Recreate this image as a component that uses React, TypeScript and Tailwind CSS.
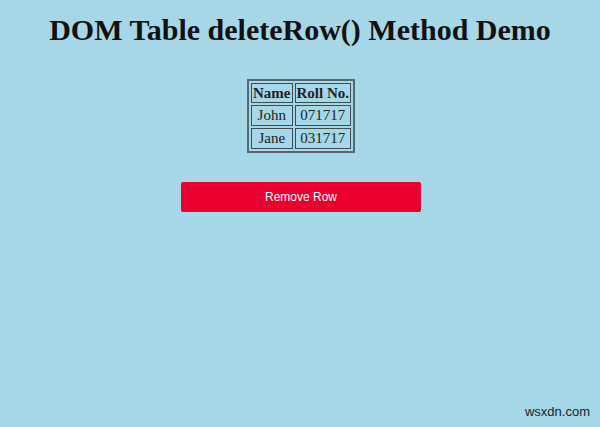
export default function App() {
  return (
    <div className="relative w-[600px] h-[427px] bg-[#a6d7e7] overflow-hidden" style={{ fontFamily: '"Liberation Serif", serif' }}>
      <h1 className="text-center text-[30px] font-bold text-[#111] pt-[12px] leading-[36px]">DOM Table deleteRow() Method Demo</h1>
      <div className="flex justify-center mt-[31px] ml-[2px]">
        <table className="border-2 border-[#56666c] border-separate border-spacing-[2px] text-[15px] text-[#222]">
          <thead>
            <tr>
              <th className="border border-[#3e4c52] px-[1px] h-[20px] leading-[18px] font-bold">Name</th>
              <th className="border border-[#3e4c52] px-[1px] h-[20px] leading-[18px] font-bold">Roll No.</th>
            </tr>
          </thead>
          <tbody>
            <tr>
              <td className="border border-[#3e4c52] px-[2px] h-[21px] leading-[19px] text-center">John</td>
              <td className="border border-[#3e4c52] px-[2px] h-[21px] leading-[19px] text-center">071717</td>
            </tr>
            <tr>
              <td className="border border-[#3e4c52] px-[2px] h-[21px] leading-[19px] text-center">Jane</td>
              <td className="border border-[#3e4c52] px-[2px] h-[21px] leading-[19px] text-center">031717</td>
            </tr>
          </tbody>
        </table>
      </div>
      <div className="flex justify-center mt-[29px] ml-[2px]">
        <button className="w-[240px] h-[30px] bg-[#ea0030] rounded-[2px] text-white text-[12px]" style={{ fontFamily: '"Liberation Sans", Arial, sans-serif' }}>Remove Row</button>
      </div>
      <div className="absolute right-[10px] bottom-[6px] text-[13px] text-[#222]" style={{ fontFamily: '"Liberation Sans", Arial, sans-serif' }}>wsxdn.com</div>
    </div>
  );
}
